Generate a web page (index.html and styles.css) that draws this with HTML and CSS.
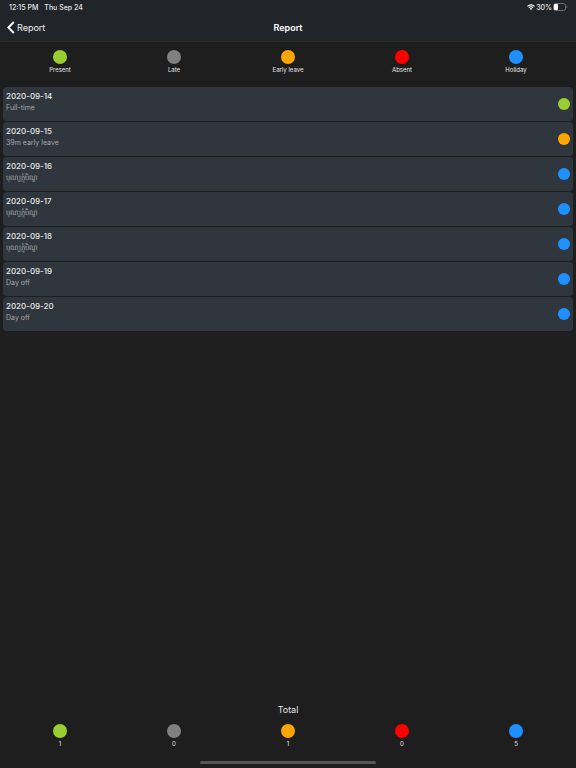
FILE: index.html
```html
<!DOCTYPE html>
<html lang="en">

<head>
  <meta charset="utf-8">
  <meta name="viewport" content="width=device-width, initial-scale=1">
  <title>Report</title>
  <link rel="stylesheet" href="styles.css">
</head>

<body>
  <header class="header">
    <div class="status-bar">
      <span>12:15 PM</span>
      <span>Thu Sep 24</span>
      <div class="status-right">
        <svg width="8" height="6" viewBox="0 0 16 12" aria-hidden="true">
          <g fill="none" stroke="#fff" stroke-width="2.2">
            <path d="M1 4.6a10 10 0 0 1 14 0" />
            <path d="M3.6 7.4a6.2 6.2 0 0 1 8.8 0" />
          </g>
          <path d="M8 12 5.4 9.3a3.7 3.7 0 0 1 5.2 0z" fill="#fff" />
        </svg>
        <span>30%</span>
        <svg width="15" height="8" viewBox="0 0 15 8" aria-hidden="true">
          <rect x="0.5" y="0.5" width="12" height="7" rx="2" fill="none" stroke="#6d7173" />
          <rect x="1" y="1" width="4" height="6" rx="1" fill="#fff" />
          <path d="M13.5 2.6a1.5 1.5 0 0 1 0 2.8z" fill="#6d7173" />
        </svg>
      </div>
    </div>
    <nav class="nav-bar">
      <a href="#" class="back">
        <svg width="8" height="13" viewBox="0 0 8 13" aria-hidden="true">
          <path d="M6.8 1 1.4 6.5 6.8 12" fill="none" stroke="#fff" stroke-width="1.9" />
        </svg>
        Report
      </a>
      <h1 class="title">Report</h1>
    </nav>
  </header>

  <main class="content">
    <ul class="legend">
      <li><span class="dot present"></span>Present</li>
      <li><span class="dot late"></span>Late</li>
      <li><span class="dot early"></span>Early leave</li>
      <li><span class="dot absent"></span>Absent</li>
      <li><span class="dot holiday"></span>Holiday</li>
    </ul>

    <ul class="days">
      <li class="day">
        <div>
          <h2 class="date">2020-09-14</h2>
          <p class="note">Full-time</p>
        </div>
        <span class="dot present"></span>
      </li>
      <li class="day">
        <div>
          <h2 class="date">2020-09-15</h2>
          <p class="note">39m early leave</p>
        </div>
        <span class="dot early"></span>
      </li>
      <li class="day">
        <div>
          <h2 class="date">2020-09-16</h2>
          <p class="note" lang="km">បុណ្យភ្ជុំបិណ្ឌ</p>
        </div>
        <span class="dot holiday"></span>
      </li>
      <li class="day">
        <div>
          <h2 class="date">2020-09-17</h2>
          <p class="note" lang="km">បុណ្យភ្ជុំបិណ្ឌ</p>
        </div>
        <span class="dot holiday"></span>
      </li>
      <li class="day">
        <div>
          <h2 class="date">2020-09-18</h2>
          <p class="note" lang="km">បុណ្យភ្ជុំបិណ្ឌ</p>
        </div>
        <span class="dot holiday"></span>
      </li>
      <li class="day">
        <div>
          <h2 class="date">2020-09-19</h2>
          <p class="note">Day off</p>
        </div>
        <span class="dot holiday"></span>
      </li>
      <li class="day">
        <div>
          <h2 class="date">2020-09-20</h2>
          <p class="note">Day off</p>
        </div>
        <span class="dot holiday"></span>
      </li>
    </ul>
  </main>

  <footer class="footer">
    <h2 class="total">Total</h2>
    <ul class="legend">
      <li><span class="dot present"></span>1</li>
      <li><span class="dot late"></span>0</li>
      <li><span class="dot early"></span>1</li>
      <li><span class="dot absent"></span>0</li>
      <li><span class="dot holiday"></span>5</li>
    </ul>
    <div class="home-bar"></div>
  </footer>
</body>

</html>
```
FILE: styles.css
```css
* {
  box-sizing: border-box;
}

body {
  display: flex;
  flex-direction: column;
  min-height: 100vh;
  margin: 0;
  background: #1e1e1e;
  color: #e6e6e6;
  font-family: Inter, "Noto Sans", sans-serif;
}

h1,
h2,
p,
ul {
  margin: 0;
  padding: 0;
}

ul {
  list-style: none;
}

.header {
  background: #212529;
  border-bottom: 1px solid #2b2e31;
}

.status-bar {
  display: flex;
  align-items: center;
  gap: 6px;
  height: 14px;
  padding: 0 8px 0 9px;
  font-size: 7px;
  font-weight: 500;
}

.status-right {
  display: flex;
  align-items: center;
  gap: 1px;
  margin-left: auto;
}

.nav-bar {
  display: grid;
  grid-template-columns: 1fr auto 1fr;
  align-items: center;
  height: 27px;
  padding: 0 7px;
}

.back {
  display: flex;
  align-items: center;
  gap: 2px;
  justify-self: start;
  color: #f0f0f0;
  font-size: 9px;
  text-decoration: none;
}

.title {
  color: #ffffff;
  font-size: 9px;
  font-weight: 600;
}

.content {
  flex: 1;
  padding: 8px 3px;
}

.legend {
  display: grid;
  grid-template-columns: repeat(5, 1fr);
  font-size: 6px;
  line-height: 8px;
}

.legend li {
  display: flex;
  flex-direction: column;
  align-items: center;
  gap: 2px;
}

.dot {
  flex: none;
  width: 12px;
  height: 12px;
  border-radius: 50%;
}

.legend .dot {
  width: 14px;
  height: 14px;
}

.present {
  background: #9acd32;
}

.late {
  background: #808080;
}

.early {
  background: #ffa500;
}

.absent {
  background: #ff0000;
}

.holiday {
  background: #1e90ff;
}

.days {
  display: flex;
  flex-direction: column;
  gap: 1px;
  margin-top: 13px;
}

.day {
  display: flex;
  align-items: center;
  justify-content: space-between;
  height: 34px;
  padding: 0 3px;
  border-radius: 4px;
  background: #30363d;
}

.date {
  font-size: 8px;
  font-weight: 500;
  line-height: 12px;
}

.note {
  height: 17px;
  color: #a3a6a9;
  font-size: 7px;
  line-height: 12px;
}

.footer {
  padding: 0 3px 4px;
}

.total {
  margin-bottom: 7px;
  font-size: 9px;
  font-weight: 400;
  line-height: 14px;
  text-align: center;
}

.home-bar {
  width: 31%;
  height: 3px;
  margin: 13px auto 0;
  border-radius: 2px;
  background: #555555;
}
```
